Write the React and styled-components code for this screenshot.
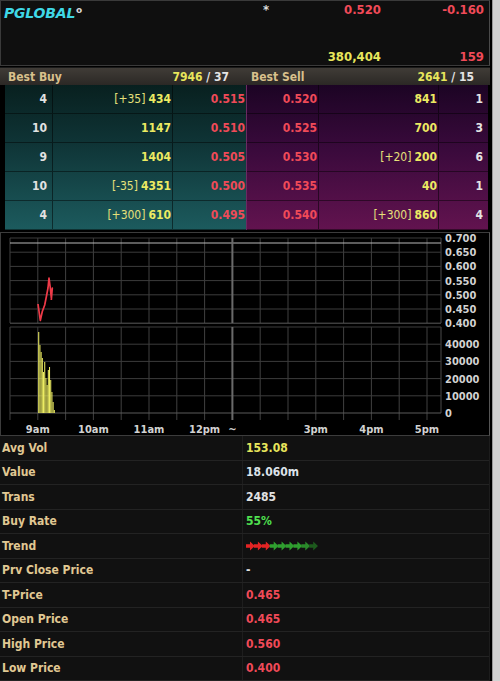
import styled, { createGlobalStyle } from "styled-components";

const GlobalStyle = createGlobalStyle`
  html, body {
    margin: 0;
    padding: 0;
    background: #000;
  }
  body {
    font-family: "DejaVu Sans Condensed", "DejaVu Sans", sans-serif;
    font-stretch: condensed;
  }
`;

const buys = [
  { count: 4, chg: "[+35]", qty: 434, price: "0.515" },
  { count: 10, chg: "", qty: 1147, price: "0.510" },
  { count: 9, chg: "", qty: 1404, price: "0.505" },
  { count: 10, chg: "[-35]", qty: 4351, price: "0.500" },
  { count: 4, chg: "[+300]", qty: 610, price: "0.495" },
];

const sells = [
  { count: 1, chg: "", qty: 841, price: "0.520" },
  { count: 3, chg: "", qty: 700, price: "0.525" },
  { count: 6, chg: "[+20]", qty: 200, price: "0.530" },
  { count: 1, chg: "", qty: 40, price: "0.535" },
  { count: 4, chg: "[+300]", qty: 860, price: "0.540" },
];

const stats = [
  { label: "Avg Vol", value: "153.08", color: "#e8e65c" },
  { label: "Value", value: "18.060m", color: "#dde3ea" },
  { label: "Trans", value: "2485", color: "#e2e2e2" },
  { label: "Buy Rate", value: "55%", color: "#4fe04f" },
  { label: "Trend", trend: true },
  { label: "Prv Close Price", value: "-", color: "#e2e2e2" },
  { label: "T-Price", value: "0.465", color: "#f04a58" },
  { label: "Open Price", value: "0.465", color: "#f04a58" },
  { label: "High Price", value: "0.560", color: "#f04a58" },
  { label: "Low Price", value: "0.400", color: "#f04a58" },
];

const Page = styled.div`
  display: flex;
  width: 500px;
  height: 681px;
  overflow: hidden;
`;

const Main = styled.div`
  width: 492px;
  background: #000;
  display: flex;
  flex-direction: column;
`;

const ScrollTrack = styled.div`
  flex: 1;
  background: #d2d2d2;
  border-left: 1px solid #9a9a9a;
`;

const Header = styled.div`
  height: 66px;
  box-sizing: border-box;
  background: #0f0f0f;
  border: 1px solid #3a3a3a;
  border-right-color: #4a4a4a;
  width: 490px;
  display: grid;
  grid-template-columns: 253px 124px 1fr;
  grid-template-rows: 1fr 1fr;
  padding: 1px 5px 1px 3px;
  font-weight: bold;
  font-size: 13px;
`;

const Name = styled.div`
  color: #3fd8e6;
  font-style: italic;
  font-size: 14px;
  font-family: "DejaVu Sans", sans-serif;
  font-stretch: normal;
  margin-top: 3px;
  letter-spacing: -0.2px;
  sup {
    color: #d8d8d8;
    font-size: 9px;
    font-style: normal;
    margin-left: 1px;
    vertical-align: 5px;
  }
`;

const Cell = styled.div`
  display: flex;
  justify-content: ${(p) => p.$justify || "flex-end"};
  align-items: ${(p) => (p.$bottom ? "flex-end" : "flex-start")};
  color: ${(p) => p.$color || "#e0e0e0"};
  grid-column: ${(p) => p.$col};
  grid-row: ${(p) => p.$row};
  padding-left: ${(p) => p.$pl || 0}px;
`;

const Star = styled.span`
  color: #dcdcdc;
  font-size: 13px;
`;

const Book = styled.div`
  margin-top: 1px;
  width: 490px;
`;

const BookHead = styled.div`
  display: grid;
  grid-template-columns: 246px 1fr;
  height: 17px;
  background: linear-gradient(#403c37, #2b2825);
  border-top: 1px solid #1a1a1a;
  font-size: 12px;
  font-weight: bold;
`;

const HeadCell = styled.div`
  display: flex;
  align-items: center;
  justify-content: space-between;
  padding: 0 ${(p) => p.$pr}px 0 ${(p) => p.$pl}px;
  color: #d8c08c;
  b {
    color: #e8e65c;
  }
  span {
    color: #e4e4e4;
  }
`;

const BookBody = styled.div`
  display: grid;
  grid-template-columns: 241px 242px;
  padding-left: 5px;
  height: 145px;
`;

const Side = styled.div`
  background: ${(p) => p.$bg};
  display: grid;
  grid-template-rows: repeat(5, 1fr);
  border-left: ${(p) => (p.$sell ? "1px solid #6a2a62" : "none")};
`;

const Row = styled.div`
  display: grid;
  grid-template-columns: ${(p) => p.$cols};
  border-bottom: 1px solid rgba(0, 0, 0, 0.45);
  font-size: 12px;
  font-weight: bold;
`;

const Num = styled.div`
  display: flex;
  align-items: center;
  justify-content: flex-end;
  padding-right: ${(p) => p.$pr || 1}px;
  color: ${(p) => p.$color};
  border-right: ${(p) => (p.$line ? "1px solid rgba(0,0,0,0.5)" : "none")};
  white-space: pre;
  small {
    font-size: 12px;
    font-weight: normal;
    color: #e6e07a;
    margin-right: 3px;
  }
`;

const ChartBox = styled.div`
  margin-top: 2px;
  width: 490px;
  height: 204px;
  box-sizing: border-box;
  border: 1px solid #3c3c3c;
  border-right-color: #555;
  background: #000;
  svg {
    display: block;
  }
  text {
    font-family: "DejaVu Sans", sans-serif;
    font-weight: bold;
    font-size: 11px;
    fill: #d2d2d2;
  }
`;

const Stats = styled.div`
  width: 489px;
  display: grid;
  grid-template-rows: repeat(10, 24.5px);
  background: #111;
  border-right: 1px solid #1d1d1d;
`;

const StatRow = styled.div`
  display: grid;
  grid-template-columns: 243px 1fr;
  border-bottom: 1px solid #232323;
  font-size: 12px;
  font-weight: bold;
`;

const StatLabel = styled.div`
  display: flex;
  align-items: center;
  padding-left: 2px;
  color: #e0c893;
  border-right: 1px solid #1e1e1e;
`;

const StatValue = styled.div`
  display: flex;
  align-items: center;
  padding-left: 3px;
  color: ${(p) => p.$color};
`;

const vLines = Array.from({ length: 16 }, (_, i) => 12 + i * 27.8);
const priceLines = [238, 252.2, 266.4, 280.6, 294.8, 309, 323.2];
const priceLabels = ["0.700", "0.650", "0.600", "0.550", "0.500", "0.450", "0.400"];
const volLines = [327, 344.2, 361.4, 378.6, 395.8, 413];
const volLabels = ["", "40000", "30000", "20000", "10000", "0"];
const xLabels = [
  ["9am", 39.8],
  ["10am", 95.4],
  ["11am", 151],
  ["12pm", 206.6],
  ["~", 234.4],
  ["3pm", 317.8],
  ["4pm", 373.4],
  ["5pm", 429],
];
const pricePath = [
  [40, 304], [42.3, 320.5], [44.3, 311.5], [46.7, 305], [48.3, 297],
  [50, 288], [51, 278], [52.3, 288], [53.3, 298], [54.3, 288], [53.3, 300],
];
const volTops = [332, 345, 352, 358, 372, 362, 378, 385, 370, 367, 380, 392, 402, 410];

function Chart() {
  return (
    <ChartBox>
      <svg width="488" height="202" viewBox="3 233 488 202">
        {vLines.filter((x) => x < 440).map((x, i) => (
          <g key={i}>
            <line x1={x} y1="238" x2={x} y2="323" stroke="#404040" strokeWidth="1" />
            <line x1={x} y1="327" x2={x} y2="420" stroke="#404040" strokeWidth="1" />
          </g>
        ))}
        <line x1="443" y1="238" x2="443" y2="323" stroke="#4a4a4a" />
        <line x1="443" y1="327" x2="443" y2="413" stroke="#4a4a4a" />
        {priceLines.map((y, i) => (
          <line key={i} x1="12" y1={y} x2="443" y2={y} stroke={i === 6 ? "#5a5a5a" : "#3c3c3c"} />
        ))}
        <line x1="12" y1="243" x2="443" y2="243" stroke="#b8b8b8" strokeWidth="1.2" />
        {volLines.map((y, i) => (
          <line key={i} x1="12" y1={y} x2="443" y2={y} stroke={i === 5 ? "#5a5a5a" : "#3c3c3c"} />
        ))}
        <line x1="234.4" y1="238" x2="234.4" y2="323" stroke="#6a6a6a" strokeWidth="2" />
        <line x1="234.4" y1="327" x2="234.4" y2="420" stroke="#6a6a6a" strokeWidth="2" />
        {volTops.map((t, i) => (
          <rect key={i} x={40.2 + i * 1.2} y={t} width="1.05" height={413 - t} fill="#ecec62" />
        ))}
        <polyline
          points={pricePath.map((p) => p.join(",")).join(" ")}
          fill="none"
          stroke="#ee3a48"
          strokeWidth="1.7"
          strokeLinejoin="round"
        />
        {priceLabels.map((t, i) => (
          <text key={t} x="447" y={priceLines[i] + 4}>{t}</text>
        ))}
        {volLabels.map((t, i) =>
          t ? (
            <text key={t} x="447" y={volLines[i] + 4}>{t}</text>
          ) : null
        )}
        {xLabels.map(([t, x]) => (
          <text key={t} x={x} y="433" textAnchor="middle">{t}</text>
        ))}
      </svg>
    </ChartBox>
  );
}

const arrowColors = ["#e42424", "#e42424", "#e42424", "#2fa02f", "#2fa02f", "#2fa02f", "#2fa02f", "#2a8a2a", "#1d5a1d"];

function Trend() {
  return (
    <svg width="74" height="10" viewBox="0 0 74 10">
      {arrowColors.map((c, i) => {
        const o = i * 7.9;
        return (
          <path
            key={i}
            d={`M${o} 3.2 H${o + 4} V0.6 L${o + 8.8} 5 L${o + 4} 9.4 V6.8 H${o} Z`}
            fill={c}
          />
        );
      })}
    </svg>
  );
}

export default function App() {
  return (
    <>
      <GlobalStyle />
      <Page>
        <Main>
          <Header>
            <Name $col="1" $row="1">
              PGLOBAL<sup>o</sup>
            </Name>
            <Cell $col="2" $row="1" $justify="space-between" $pl={6} $color="#f04a58">
              <Star>*</Star>
              <span>0.520</span>
            </Cell>
            <Cell $col="3" $row="1" $color="#f04a58">-0.160</Cell>
            <Cell $col="2" $row="2" $bottom $color="#e8e65c">380,404</Cell>
            <Cell $col="3" $row="2" $bottom $color="#f04a58">159</Cell>
          </Header>

          <Book>
            <BookHead>
              <HeadCell $pl={8} $pr={17}>
                Best Buy
                <div>
                  <b>7946</b>
                  <span> / 37</span>
                </div>
              </HeadCell>
              <HeadCell $pl={5} $pr={16}>
                Best Sell
                <div>
                  <b>2641</b>
                  <span> / 15</span>
                </div>
              </HeadCell>
            </BookHead>
            <BookBody>
              <Side $bg="linear-gradient(#08201f, #0f3436 40%, #1c5b5e)">
                {buys.map((b, i) => (
                  <Row key={i} $cols="48px 120px 1fr">
                    <Num $pr={5} $line $color="#e2e2e2">{b.count}</Num>
                    <Num $line $color="#ecea62">
                      {b.chg && <small>{b.chg}</small>}
                      {b.qty}
                    </Num>
                    <Num $color="#f04a58">{b.price}</Num>
                  </Row>
                ))}
              </Side>
              <Side $sell $bg="linear-gradient(#1c0424, #3a0a3c 45%, #62134f)">
                {sells.map((s, i) => (
                  <Row key={i} $cols="72px 120px 1fr">
                    <Num $line $color="#f04a58">{s.price}</Num>
                    <Num $pr={0} $line $color="#ecea62">
                      {s.chg && <small>{s.chg}</small>}
                      {s.qty}
                    </Num>
                    <Num $pr={5} $color="#e4e4e4">{s.count}</Num>
                  </Row>
                ))}
              </Side>
            </BookBody>
          </Book>

          <Chart />

          <Stats>
            {stats.map((s) => (
              <StatRow key={s.label}>
                <StatLabel>{s.label}</StatLabel>
                <StatValue $color={s.color}>{s.trend ? <Trend /> : s.value}</StatValue>
              </StatRow>
            ))}
          </Stats>
        </Main>
        <ScrollTrack />
      </Page>
    </>
  );
}
